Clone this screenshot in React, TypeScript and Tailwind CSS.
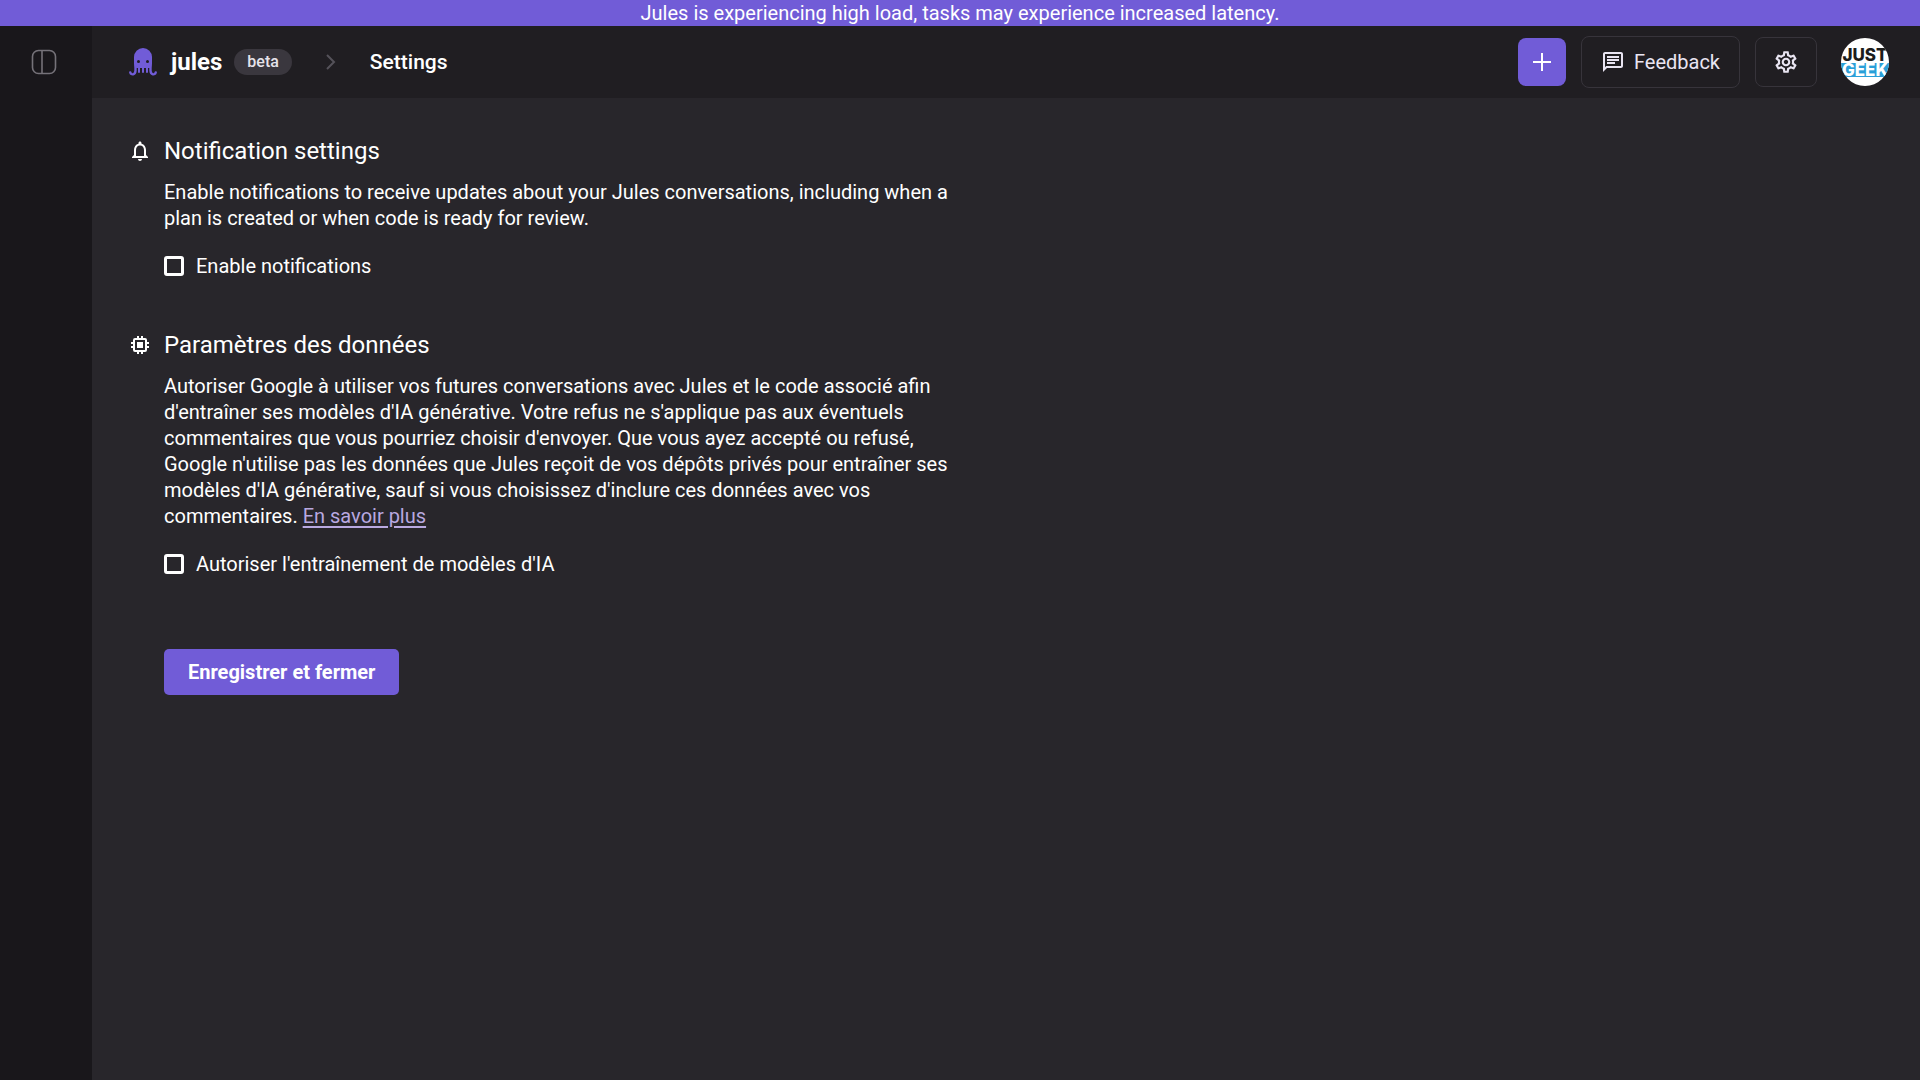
import { useState } from 'react'
import { MdNotificationsNone, MdOutlineChat, MdOutlineSettings } from 'react-icons/md'

function PanelIcon() {
  return (
    <svg width="26" height="26" viewBox="0 0 26 26" fill="none" stroke="#757279" strokeWidth="1.6">
      <rect x="1.5" y="1.5" width="23" height="23" rx="6" />
      <path d="M11 1.5v23" />
    </svg>
  )
}

function OctopusLogo() {
  return (
    <svg width="28" height="30" viewBox="0 0 28 30" fill="none" stroke="#715cd7" strokeLinecap="round">
      <path d="M5 10a9 9 0 0 1 18 0v7l-1 4H6l-1-4z" fill="#715cd7" stroke="none" />
      <path d="M6.5 18v5.5c0 4.5-4.500 5-5.200 2M21.5 18v5.500c0 4.500 4.500 5 5.200 2" strokeWidth="2.4" />
      <path d="M10 19v6M14 19v6M18 19v6" strokeWidth="2" />
      <circle cx="9.5" cy="14.5" r="1.5" fill="#201e22" stroke="none" />
      <circle cx="18.5" cy="14.5" r="1.5" fill="#201e22" stroke="none" />
    </svg>
  )
}

function ChipIcon() {
  return (
    <svg width="24" height="24" viewBox="0 0 24 24" fill="none" stroke="currentColor" strokeWidth="2" className="mt-[2px] shrink-0">
      <rect x="6" y="6" width="12" height="12" rx="1" />
      <path d="M10 3v3M14 3v3M10 18v3M14 18v3M3 10h3M3 14h3M18 10h3M18 14h3" />
      <rect x="9" y="9" width="6" height="6" fill="currentColor" stroke="none" />
    </svg>
  )
}

function Avatar() {
  return (
    <svg width="48" height="48" viewBox="0 0 48 48" role="img" aria-label="Just Geek">
      <defs>
        <clipPath id="avatar-clip">
          <circle cx="24" cy="24" r="24" />
        </clipPath>
      </defs>
      <g clipPath="url(#avatar-clip)" fontFamily="Inter, sans-serif" fontWeight="800" fontSize="17" textAnchor="middle">
        <rect width="48" height="48" fill="#fff" />
        <rect y="25" width="48" height="14" fill="#2a9fd8" />
        <text x="24" y="23" fill="#1c1c1c">JUST</text>
        <text x="24" y="38" fill="#fff">GEEK</text>
      </g>
    </svg>
  )
}

interface CheckOptionProps {
  id: string
  label: string
}

function CheckOption({ id, label }: CheckOptionProps) {
  const [checked, setChecked] = useState<boolean>(false)

  return (
    <div className="flex items-center gap-3">
      <input
        id={id}
        type="checkbox"
        checked={checked}
        onChange={(e) => setChecked(e.target.checked)}
        className="size-5 shrink-0 appearance-none rounded-[3px] border-3 border-white checked:bg-[#715cd7]"
      />
      <label htmlFor={id}>{label}</label>
    </div>
  )
}

export default function App() {
  return (
    <div className="min-h-screen flex flex-col bg-[#28262b] text-white font-['Roboto',sans-serif] text-[20px] leading-[26px]">
      <div className="bg-[#715cd7] text-center">
        Jules is experiencing high load, tasks may experience increased latency.
      </div>

      <div className="flex flex-1">
        {/* Sidebar */}
        <aside className="w-23 shrink-0 bg-[#19171b] px-[31px] py-[23px]">
          <button aria-label="Toggle sidebar" className="block">
            <PanelIcon />
          </button>
        </aside>

        <div className="flex-1">
          <header className="h-18 flex items-center justify-between bg-[#201e22] pl-[37px] pr-[31px]">
            <div className="flex items-center">
              <a href="#" className="flex items-center gap-[14px]">
                <OctopusLogo />
                <span className="text-[24px] font-bold">jules</span>
              </a>
              <span className="ml-3 rounded-full bg-[#3a373e] px-[13px] text-[16px] font-medium text-[#e6e3ea]">beta</span>
              <svg className="mx-[34px]" width="10" height="16" viewBox="0 0 10 16" fill="none" stroke="#55525a" strokeWidth="2">
                <path d="M1 1l7 7-7 7" />
              </svg>
              <h1 className="text-[21px] font-medium">Settings</h1>
            </div>

            <div className="flex items-center">
              <button aria-label="New task" className="size-12 flex items-center justify-center rounded-lg bg-[#715cd7]">
                <svg width="20" height="20" viewBox="0 0 20 20" stroke="#fff" strokeWidth="2">
                  <path d="M10 1v18M1 10h18" />
                </svg>
              </button>
              <button className="ml-[15px] h-[52px] flex items-center gap-[9px] rounded-lg border border-[#37343b] px-[19px] text-[#e9e5f2]">
                <MdOutlineChat size={24} />
                Feedback
              </button>
              <button aria-label="Settings" className="ml-[15px] h-[50px] w-[62px] flex items-center justify-center rounded-lg border border-[#37343b] text-[#e9e5f2]">
                <MdOutlineSettings size={26} />
              </button>
              <button aria-label="Account" className="ml-6">
                <Avatar />
              </button>
            </div>
          </header>

          <main className="max-w-[880px] pt-[39px] pl-9">
            {/* Notifications */}
            <section className="flex gap-3">
              <MdNotificationsNone size={24} className="mt-[2px] shrink-0" />
              <div>
                <h2 className="text-[24px] leading-7">Notification settings</h2>
                <p className="mt-[14px] mb-[22px]">
                  Enable notifications to receive updates about your Jules conversations, including when a plan is created or when code is ready for review.
                </p>
                <CheckOption id="notifications" label="Enable notifications" />
              </div>
            </section>

            {/* Data */}
            <section className="mt-13 flex gap-3">
              <ChipIcon />
              <div>
                <h2 className="text-[24px] leading-7">Paramètres des données</h2>
                <p className="mt-[14px] mb-[22px]">
                  Autoriser Google à utiliser vos futures conversations avec Jules et le code associé afin d'entraîner ses modèles d'IA générative. Votre refus ne s'applique pas aux éventuels commentaires que vous pourriez choisir d'envoyer. Que vous ayez accepté ou refusé, Google n'utilise pas les données que Jules reçoit de vos dépôts privés pour entraîner ses modèles d'IA générative, sauf si vous choisissez d'inclure ces données avec vos commentaires.{' '}
                  <a href="#" className="text-[#b9a9e0] underline underline-offset-3">En savoir plus</a>
                </p>
                <CheckOption id="training" label="Autoriser l'entraînement de modèles d'IA" />
                <button className="mt-18 h-[46px] rounded-[5px] bg-[#715cd7] px-6 font-bold">
                  Enregistrer et fermer
                </button>
              </div>
            </section>
          </main>
        </div>
      </div>
    </div>
  )
}
